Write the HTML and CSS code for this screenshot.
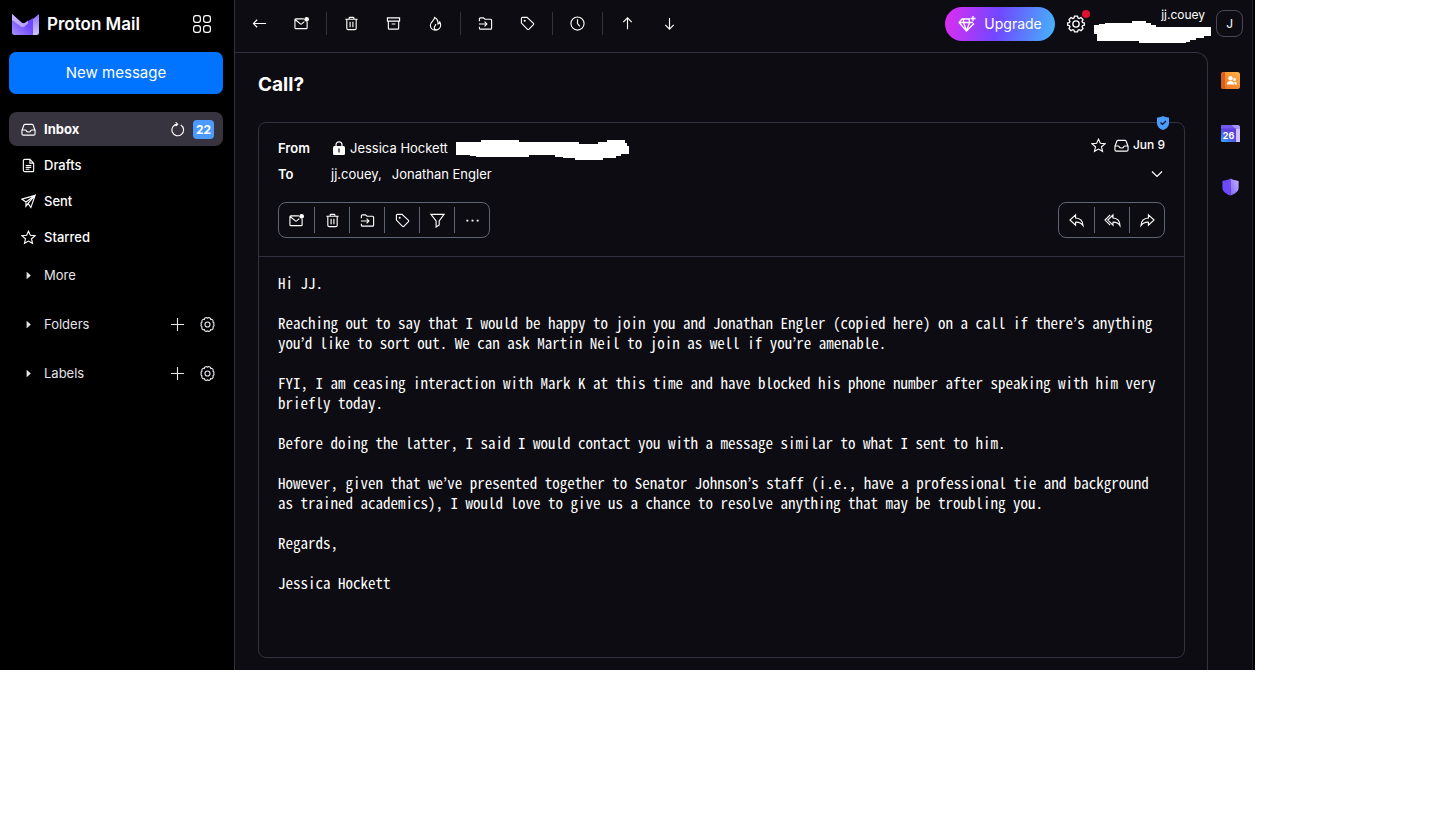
FILE: index.html
```html
<!DOCTYPE html>
<html lang="en">
<head>
<meta charset="utf-8">
<title>Inbox | Proton Mail</title>
<link rel="stylesheet" href="styles.css">
</head>
<body>
<svg class="defs" aria-hidden="true">
  <symbol id="inbox" viewBox="0 0 16 16"><path d="M4.2 2.5h7.6c.5 0 .9.3 1.1.7L15 9v3.5c0 .8-.7 1.500-1.500 1.500h-11C1.700 14 1 13.300 1 12.500V9l2.100-5.800c.2-.4.6-.7 1.100-.7zM1 8.500h3.700c.3 0 .5.2.7.5.4 1.100 1.400 1.700 2.600 1.700s2.200-.6 2.600-1.700c.2-.3.400-.5.700-.5H15"/></symbol>
  <symbol id="draft" viewBox="0 0 16 16"><path d="M4 1.500h5.500L13.500 5.500v8c0 .6-.4 1-1 1h-8.500c-.8 0-1.500-.7-1.500-1.500V3c0-.8.7-1.500 1.500-1.500zM9.500 1.500v4h4M5 8h6M5 10h6M5 12h4"/></symbol>
  <symbol id="send" viewBox="0 0 16 16"><path d="M15 1.500 1 5.500l4.300 3L15 1.500 10.500 14.500l-3-4.500L15 1.500M5.300 8.500v4.500l2.200-3"/></symbol>
  <symbol id="star" viewBox="0 0 16 16"><path d="m8 1.300 2 4.400 4.900.5-3.700 3.200 1.100 4.800L8 11.800l-4.300 2.400 1.100-4.800L1.100 6.200 6 5.700z"/></symbol>
  <symbol id="caret" viewBox="0 0 16 16"><path class="solid" d="M6 4 10.500 8 6 12z"/></symbol>
  <symbol id="plus" viewBox="0 0 16 16"><path d="M8 1v14M1 8h14"/></symbol>
  <symbol id="gear" viewBox="0 0 16 16"><path d="M6.700 1h2.600l.5 1.700 1 .4 1.600-.8 1.800 1.800-.8 1.600.4 1 1.700.5v1.800l-1.700.5-.4 1 .8 1.600-1.800 1.800-1.600-.8-1 .4L9.300 15H6.700l-.5-1.500-1-.4-1.600.8-1.800-1.800.8-1.600-.4-1L.5 9V7.200l1.700-.5.400-1-.8-1.600 1.800-1.800 1.600.8 1-.4z"/><circle cx="8" cy="8" r="2.800"/></symbol>
  <symbol id="cog" viewBox="0 0 16 16"><path d="M8 1.200a2 2 0 0 1 3.400 1.400 2 2 0 0 1 2.400 2.800A2 2 0 0 1 14.600 8a2 2 0 0 1-.8 2.700 2 2 0 0 1-2.400 2.800A2 2 0 0 1 8 14.800a2 2 0 0 1-3.400-1.300 2 2 0 0 1-2.400-2.800A2 2 0 0 1 1.400 8a2 2 0 0 1 .8-2.600 2 2 0 0 1 2.400-2.800A2 2 0 0 1 8 1.200z"/><circle cx="8" cy="8" r="2.700"/></symbol>
  <symbol id="refresh" viewBox="0 0 16 16"><path d="M11.500 3.200A6.200 6.200 0 1 1 8 2.300M6 .3l2.200 2L6 4.500"/></symbol>
  <symbol id="back" viewBox="0 0 16 16"><path d="M15 8H1.500M5.500 4l-4 4 4 4"/></symbol>
  <symbol id="up" viewBox="0 0 16 16"><path d="M8 14V2M3.500 6.500 8 2l4.500 4.500"/></symbol>
  <symbol id="down" viewBox="0 0 16 16"><path d="M8 2v12M3.500 9.500 8 14l4.500-4.500"/></symbol>
  <symbol id="unread" viewBox="0 0 16 16"><path d="M10.500 3H2c-.6 0-1 .4-1 1v8.500c0 .6.400 1 1 1h11c.6 0 1-.4 1-1V6M1.500 4l5 4.200c.6.5 1.400.5 2 0L11 6"/><circle class="solid" cx="13.500" cy="3.500" r="2.500"/></symbol>
  <symbol id="trash" viewBox="0 0 16 16"><path d="M1.500 3.500h13M5.500 3.500V2.200c0-.4.300-.7.700-.7h3.600c.4 0 .7.300.7.700v1.300M3 3.500v9.500c0 .8.700 1.500 1.500 1.500h7c.8 0 1.500-.7 1.500-1.500V3.500M6.500 6v6M9.500 6v6"/></symbol>
  <symbol id="archive" viewBox="0 0 16 16"><path d="M1.500 2h13v3.500h-13zM2.500 5.500V13c0 .6.400 1 1 1h9c.6 0 1-.4 1-1V5.500M6 8.500h4"/></symbol>
  <symbol id="flame" viewBox="0 0 16 16"><path d="M7 1.500c0 3.200-4.500 5-4.500 8.600A5.300 5.300 0 0 0 8 15c3.200 0 5.500-2.200 5.500-5 0-1.600-.3-2.600-.9-3.600-.3 1.300-1 2-1.900 2.200C10.800 5 9.500 2.500 7 1.500zM8.500 14.800c-1.600-.6-2-1.600-1.800-2.700.2-1.200 1.600-2 1.600-3.600"/></symbol>
  <symbol id="move" viewBox="0 0 16 16"><path d="M1.500 5.500V3c0-.6.400-1 1-1h3.300l1.700 1.500h6c.6 0 1 .4 1 1V13c0 .6-.4 1-1 1h-11c-.6 0-1-.4-1-1v-1.500M1 8.500h8.500M7 6l2.500 2.500L7 11"/></symbol>
  <symbol id="tag" viewBox="0 0 16 16"><path d="M1.500 2.500v5l6.500 6.700c.5.400 1 .4 1.400 0l5-5c.4-.4.4-1 0-1.400L7.500 1.500h-5c-.6 0-1 .4-1 1z"/><circle class="solid" cx="5" cy="5" r="1.100"/></symbol>
  <symbol id="clock" viewBox="0 0 16 16"><circle cx="8" cy="8" r="7"/><path d="M8 3.500V8l2.500 3"/></symbol>
  <symbol id="filter" viewBox="0 0 16 16"><path d="M1 1.500h14L9.800 8.500v4.200L6.500 15V8.500z"/></symbol>
  <symbol id="dots" viewBox="0 0 16 16"><path class="solid" d="M1.500 7.200h2v1.800h-2zM7 7.200h2v1.800H7zM12.500 7.200h2v1.800h-2z"/></symbol>
  <symbol id="reply" viewBox="0 0 16 16"><path d="M7 2 1 7.500 7 13V9.800c3.600-.2 6 .8 8 3.700C14.800 8.500 12 5.500 7 5.300z"/></symbol>
  <symbol id="replyall" viewBox="0 0 18 16"><path d="M9.500 2 4 7.500 9.500 13V9.800c3.600-.2 5.700.8 7.500 3.700-.1-5-2.700-8-7.500-8.200zM6.500 2 1 7.500 6.500 13"/></symbol>
  <symbol id="chevron" viewBox="0 0 16 16"><path d="m3 5.500 5 5 5-5"/></symbol>
  <symbol id="gem" viewBox="0 0 18 16"><path d="M12 3H4L1 6.500l7.500 8.500L16 7.500M1 6.500h14M5.500 6.500l3 8 3.200-8M5 3l1 3.500M11 3.500l.7 3M15 0v5M12.500 2.500h5"/></symbol>
</svg>

<div class="app">
  <aside class="sidebar">
    <div class="brand">
      <a class="logo" href="#" aria-label="Proton Mail">
        <svg class="logo-mark" viewBox="0 0 27 21">
          <defs>
            <linearGradient id="lm1" x1="0" y1="0" x2="1" y2="1"><stop offset="0" stop-color="#c9b6ff"/><stop offset="1" stop-color="#b39dff"/></linearGradient>
            <linearGradient id="lm2" x1="0" y1="1" x2="0" y2="0"><stop offset="0" stop-color="#d3c6ff"/><stop offset="1" stop-color="#8f70ff"/></linearGradient>
            <linearGradient id="lm3" x1="0" y1="1" x2="1" y2="0"><stop offset="0" stop-color="#a98fff"/><stop offset=".6" stop-color="#6d4aff"/></linearGradient>
          </defs>
          <path fill="url(#lm3)" d="M0 0l10 9c1 .8 2 .8 3 0L21 4v17H2.500A2.500 2.500 0 0 1 0 18.500z"/>
          <path fill="url(#lm1)" d="M0 0l9.500 8.500c1.300 1 2.700 1 4 0l2.500-2v3l-3.500 3c-1 .8-2.500.8-3.500 0L0 6z"/>
          <path fill="url(#lm2)" d="M27 0v18.500a2.500 2.500 0 0 1-2.500 2.500H21V5z"/>
        </svg>
        <span class="logo-text">Proton Mail</span>
      </a>
      <button class="apps" aria-label="Proton apps">
        <svg viewBox="0 0 18 18"><rect x=".6" y=".6" width="6.800" height="6.800" rx="2.400"/><rect x="10.600" y=".6" width="6.800" height="6.800" rx="2.400"/><rect x=".6" y="10.600" width="6.800" height="6.800" rx="2.400"/><rect x="10.600" y="10.600" width="6.800" height="6.800" rx="2.400"/></svg>
      </button>
    </div>
    <button class="compose">New message</button>
    <nav class="nav">
      <div class="nav-row active">
        <a href="#"><svg class="icon"><use href="#inbox"/></svg>Inbox</a>
        <button aria-label="Refresh"><svg class="icon"><use href="#refresh"/></svg></button>
        <span class="count">22</span>
      </div>
      <div class="nav-row"><a href="#"><svg class="icon"><use href="#draft"/></svg>Drafts</a></div>
      <div class="nav-row"><a href="#"><svg class="icon"><use href="#send"/></svg>Sent</a></div>
      <div class="nav-row"><a href="#"><svg class="icon"><use href="#star"/></svg>Starred</a></div>
      <div class="nav-row weak"><button class="toggle"><svg class="icon"><use href="#caret"/></svg>More</button></div>
      <div class="nav-row weak group">
        <button class="toggle"><svg class="icon"><use href="#caret"/></svg>Folders</button>
        <button aria-label="Create folder"><svg class="icon"><use href="#plus"/></svg></button>
        <button aria-label="Manage folders"><svg class="icon"><use href="#cog"/></svg></button>
      </div>
      <div class="nav-row weak group">
        <button class="toggle"><svg class="icon"><use href="#caret"/></svg>Labels</button>
        <button aria-label="Create label"><svg class="icon"><use href="#plus"/></svg></button>
        <button aria-label="Manage labels"><svg class="icon"><use href="#cog"/></svg></button>
      </div>
    </nav>
  </aside>

  <div class="main">
    <header class="topbar">
      <div class="tools">
        <button aria-label="Back"><svg class="icon"><use href="#back"/></svg></button>
        <button aria-label="Mark as unread"><svg class="icon"><use href="#unread"/></svg></button>
        <span class="sep"></span>
        <button aria-label="Move to trash"><svg class="icon"><use href="#trash"/></svg></button>
        <button aria-label="Archive"><svg class="icon"><use href="#archive"/></svg></button>
        <button aria-label="Move to spam"><svg class="icon"><use href="#flame"/></svg></button>
        <span class="sep"></span>
        <button aria-label="Move to"><svg class="icon"><use href="#move"/></svg></button>
        <button aria-label="Label as"><svg class="icon"><use href="#tag"/></svg></button>
        <span class="sep"></span>
        <button aria-label="Snooze"><svg class="icon"><use href="#clock"/></svg></button>
        <span class="sep"></span>
        <button aria-label="Previous"><svg class="icon"><use href="#up"/></svg></button>
        <button aria-label="Next"><svg class="icon"><use href="#down"/></svg></button>
      </div>
      <div class="account">
        <button class="upgrade"><svg><use href="#gem"/></svg>Upgrade</button>
        <button class="settings" aria-label="Settings"><svg><use href="#gear"/></svg><span class="dot"></span></button>
        <div class="user">
          <span class="user-name">jj.couey</span>
          <svg class="user-mask" viewBox="0 0 117 22"><path fill="#fff" d="M0 4h5V3h6V2h27V0h14v2h5v2h5v2h55v9h-7v2h-8v2h-6v2h-4v1H45v-2H3v-7H0z"/></svg>
        </div>
        <button class="avatar" aria-label="Account">J</button>
      </div>
    </header>

    <div class="body">
      <main class="panel">
        <h1>Call?</h1>
        <article class="card">
          <svg class="verified" viewBox="0 0 12 14"><path fill="#4a9dff" d="M6 0c2 1 4 1.400 6 1.600v5.800c0 3-2.500 5.200-6 6.600-3.500-1.400-6-3.600-6-6.600V1.600C2 1.400 4 1 6 0z"/><path class="tick" d="m3.500 6.500 2 2L9 5"/></svg>
          <div class="card-head">
            <div class="line">
              <span class="label">From</span>
              <svg class="lock" viewBox="0 0 12 14"><path d="M3 6V3.800a3 3 0 0 1 6 0V6"/><rect y="5" width="12" height="9" rx="1.500" fill="#fff"/><path class="keyhole" d="M6 7.500v4"/></svg>
              <span>Jessica Hockett</span>
              <svg class="sender-mask" viewBox="0 0 173 20"><path fill="#fff" d="M0 2h25V0h38v2h60v2h19V2h9V0h18v3h2v3h2v8h-8v2h-5v2h-13v2h-28v-2h-12v-1h-8v-2H73v2H20v-1h-6v-1H0z"/></svg>
              <span class="meta">
                <button aria-label="Star"><svg class="icon"><use href="#star"/></svg></button>
                <svg class="icon"><use href="#inbox"/></svg>
                <time>Jun 9</time>
              </span>
            </div>
            <div class="line">
              <span class="label">To</span>
              <span class="recipient">jj.couey,</span>
              <span>Jonathan Engler</span>
              <button class="details" aria-label="Show details"><svg class="icon"><use href="#chevron"/></svg></button>
            </div>
            <div class="actions">
              <div class="group-buttons">
                <button aria-label="Mark as unread"><svg class="icon"><use href="#unread"/></svg></button>
                <button aria-label="Move to trash"><svg class="icon"><use href="#trash"/></svg></button>
                <button aria-label="Move to"><svg class="icon"><use href="#move"/></svg></button>
                <button aria-label="Label as"><svg class="icon"><use href="#tag"/></svg></button>
                <button aria-label="Filter on"><svg class="icon"><use href="#filter"/></svg></button>
                <button aria-label="More"><svg class="icon"><use href="#dots"/></svg></button>
              </div>
              <div class="group-buttons">
                <button aria-label="Reply"><svg class="icon"><use href="#reply"/></svg></button>
                <button aria-label="Reply all"><svg class="icon wide"><use href="#replyall"/></svg></button>
                <button aria-label="Forward"><svg class="icon flip"><use href="#reply"/></svg></button>
              </div>
            </div>
          </div>
          <div class="message">
            <p>Hi JJ.</p>
            <p>Reaching out to say that I would be happy to join you and Jonathan Engler (copied here) on a call if there’s anything you’d like to sort out. We can ask Martin Neil to join as well if you’re amenable.</p>
            <p>FYI, I am ceasing interaction with Mark K at this time and have blocked his phone number after speaking with him very briefly today.</p>
            <p>Before doing the latter, I said I would contact you with a message similar to what I sent to him.</p>
            <p>However, given that we’ve presented together to Senator Johnson’s staff (i.e., have a professional tie and background as trained academics), I would love to give us a chance to resolve anything that may be troubling you.</p>
            <p>Regards,</p>
            <p>Jessica Hockett</p>
          </div>
        </article>
      </main>
      <aside class="rail">
        <button aria-label="Contacts">
          <svg viewBox="0 0 19 18"><defs><linearGradient id="ct" x1="0" y1="1" x2="1" y2="0"><stop offset="0" stop-color="#f06a20"/><stop offset="1" stop-color="#ffb648"/></linearGradient></defs><rect width="19" height="17" rx="2.500" fill="url(#ct)"/><path d="M0 2.500A2.500 2.500 0 0 1 2.500 0H4v17H2.500A2.500 2.500 0 0 1 0 14.500z" fill="#d9601c"/><g fill="#fff"><circle cx="9.500" cy="6.200" r="2.200"/><path d="M5.800 12.500c0-4.600 7.400-4.600 7.400 0z"/><circle cx="13.500" cy="7.500" r="1.500"/><path d="M13.800 12.500H16c0-2-1-3-2.800-2.800z"/></g></svg>
        </button>
        <button aria-label="Calendar">
          <svg viewBox="0 0 19 18"><defs><linearGradient id="cl" x1="0" y1="1" x2=".8" y2="0"><stop offset="0" stop-color="#2fb4ff"/><stop offset=".6" stop-color="#5a46e0"/><stop offset="1" stop-color="#5c40d8"/></linearGradient></defs><path d="M0 1.500C0 .7.700 0 1.500 0H17c1.100 0 2 .9 2 2v15h-4V4H0z" fill="#a995ff"/><path d="M0 1.500C0 .7.700 0 1.500 0h9L15 4H0z" fill="#7458f2"/><path d="M15 4h4v13h-4z" fill="#cdbfff"/><path d="M0 3.500h15V17H1.500A1.500 1.500 0 0 1 0 15.500z" fill="url(#cl)"/><text x="7.500" y="13.500" text-anchor="middle">26</text></svg>
        </button>
        <button aria-label="Security center">
          <svg viewBox="0 0 19 20"><defs><linearGradient id="sh" x1="0" y1="1" x2="1" y2="0"><stop offset="0" stop-color="#8263ff"/><stop offset="1" stop-color="#c3b2ff"/></linearGradient></defs><path d="M9.500.5C6.500 2 4 2.800.5 3.200v8C.5 15 5 18 9.500 19.500z" fill="#6d4aff"/><path d="M9.500.5c3 1.500 5.500 2.300 9 2.700v8c0 3.800-4.500 6.800-9 8.300z" fill="url(#sh)"/></svg>
        </button>
      </aside>
    </div>
  </div>
</div>
</body>
</html>
```

FILE: styles.css
```css
* {
  box-sizing: border-box;
}

body {
  margin: 0;
  background: #fff;
  color: #fff;
  font-family: Inter, "Liberation Sans", sans-serif;
  font-size: 13px;
  line-height: 20px;
}

button {
  margin: 0;
  padding: 0;
  border: 0;
  background: none;
  color: inherit;
  font: inherit;
  cursor: pointer;
}

a {
  color: inherit;
  text-decoration: none;
}

svg {
  display: block;
  flex: none;
  fill: none;
  stroke: currentColor;
  stroke-width: 1.2;
}

svg [fill] {
  stroke: none;
}

.solid {
  fill: currentColor;
  stroke: none;
}

.defs {
  display: none;
}

.icon {
  width: 15px;
  height: 15px;
}

.icon.wide {
  width: 17px;
}

.app {
  display: flex;
  width: 86.2%;
  min-height: 81.8vh;
  background: #000;
}

/* Sidebar */

.sidebar {
  flex: none;
  width: 235px;
  padding: 0 11px 0 9px;
  border-right: 1px solid #343140;
}

.brand {
  display: flex;
  align-items: center;
  justify-content: space-between;
  height: 52px;
  padding: 0 12px 4px 3px;
}

.logo {
  display: flex;
  align-items: center;
  gap: 8px;
}

.logo-mark {
  width: 27px;
  height: 21px;
}

.logo-text {
  font-size: 17px;
  font-weight: 600;
}

.apps svg {
  width: 18px;
  height: 18px;
}

.compose {
  width: 100%;
  height: 42px;
  margin-bottom: 18px;
  border-radius: 7px;
  background: #0073ff;
  font-size: 15px;
}

.nav {
  display: flex;
  flex-direction: column;
  gap: 2px;
}

.nav-row {
  display: flex;
  align-items: center;
  gap: 8px;
  height: 34px;
  padding: 0 9px 0 12px;
  border-radius: 8px;
  font-weight: 500;
}

.nav-row a,
.toggle {
  display: flex;
  flex: 1;
  align-items: center;
  gap: 8px;
}

.nav-row.active {
  background: #38343f;
  font-weight: 700;
}

.nav-row.weak {
  gap: 15px;
  margin-top: 2px;
  padding-right: 8px;
  color: #e6e4ea;
  font-weight: 400;
}

.nav-row.group {
  margin-top: 13px;
}

.count {
  width: 21px;
  border-radius: 4px;
  background: #4a9aff;
  font-size: 12px;
  line-height: 19px;
  text-align: center;
}

/* Top bar */

.main {
  display: flex;
  flex: 1;
  flex-direction: column;
  min-width: 0;
  margin-right: 2px;
  border-right: 1px solid #25232c;
  background: #0d0c12;
}

.topbar {
  display: flex;
  justify-content: space-between;
  height: 52px;
  padding: 0 9px 5px 3px;
}

.tools,
.account {
  display: flex;
  align-items: center;
}

.tools button {
  display: grid;
  place-items: center;
  width: 42px;
  height: 36px;
}

.sep {
  width: 1px;
  height: 23px;
  margin: 0 3px 0 4px;
  background: #343140;
}

.upgrade {
  display: flex;
  align-items: center;
  justify-content: center;
  gap: 8px;
  width: 110px;
  height: 34px;
  border-radius: 17px;
  background: linear-gradient(100deg, #e02cf0 0%, #7048ff 48%, #45b4fa 100%);
  font-size: 14px;
}

.upgrade svg {
  width: 18px;
  height: 16px;
  stroke-width: 1.3;
}

.settings {
  position: relative;
  margin: 0 9px 0 12px;
}

.settings svg {
  width: 18px;
  height: 18px;
}

.dot {
  position: absolute;
  top: -5px;
  right: -5px;
  width: 8px;
  height: 8px;
  border-radius: 50%;
  background: #e0102f;
}

.user {
  display: flex;
  flex-direction: column;
  align-items: flex-end;
  margin-right: 5px;
  padding-top: 4px;
}

.user-name {
  margin-right: 6px;
  font-size: 12px;
  line-height: 12px;
}

.user-mask {
  width: 117px;
  height: 22px;
}

.avatar {
  width: 27px;
  height: 27px;
  border: 1px solid #4a4658;
  border-radius: 8px;
  font-size: 12px;
}

/* Message panel */

.body {
  display: flex;
  flex: 1;
}

.panel {
  display: flex;
  flex: 1;
  flex-direction: column;
  min-width: 0;
  padding: 22px 22px 12px 23px;
  border: 1px solid #343140;
  border-width: 1px 1px 0 0;
  border-radius: 0 12px 0 0;
}

h1 {
  margin: 0 0 27px;
  font-size: 19px;
  font-weight: 700;
  line-height: 20px;
}

.card {
  position: relative;
  flex: 1;
  border: 1px solid #343140;
  border-radius: 8px;
}

.verified {
  position: absolute;
  top: -7px;
  right: 15px;
  width: 12px;
  height: 14px;
}

.tick {
  stroke: #10101a;
}

.card-head {
  padding: 12px 19px 18px;
  border-bottom: 1px solid #343140;
}

.line {
  display: flex;
  align-items: center;
  height: 26px;
}

.label {
  width: 53px;
  font-weight: 600;
}

.lock {
  width: 12px;
  height: 14px;
  margin: 0 5px 0 2px;
}

.keyhole {
  stroke: #0d0c12;
}

.sender-mask {
  width: 173px;
  height: 20px;
  margin: 4px 0 0 8px;
}

.recipient {
  margin-right: 10px;
}

.meta {
  display: flex;
  align-items: center;
  align-self: flex-start;
  gap: 8px;
  margin-left: auto;
  font-size: 12px;
  font-weight: 500;
}

.meta time {
  margin-left: -4px;
}

.details {
  margin-left: auto;
}

.details .icon {
  width: 16px;
  height: 16px;
}

.actions {
  display: flex;
  justify-content: space-between;
  margin-top: 15px;
}

.group-buttons {
  display: flex;
  padding: 4px 0;
  border: 1px solid #5d6474;
  border-radius: 8px;
}

.group-buttons button {
  display: grid;
  place-items: center;
  width: 35px;
  height: 26px;
}

.group-buttons button + button {
  border-left: 1px solid #5d6474;
}

.flip {
  transform: scaleX(-1);
}

.message {
  padding: 16px 19px;
  font-family: "Noto Sans Mono CJK KR", "Liberation Mono", monospace;
  font-size: 15px;
  line-height: 20px;
}

.message p {
  margin: 0 0 20px;
}

/* Side apps */

.rail {
  display: flex;
  flex: none;
  flex-direction: column;
  align-items: center;
  gap: 35px;
  width: 44px;
  padding-top: 20px;
}

.rail svg {
  width: 19px;
  height: 18px;
}

.rail text {
  fill: #fff;
  stroke: none;
  font-size: 9px;
  font-weight: 700;
}
```
